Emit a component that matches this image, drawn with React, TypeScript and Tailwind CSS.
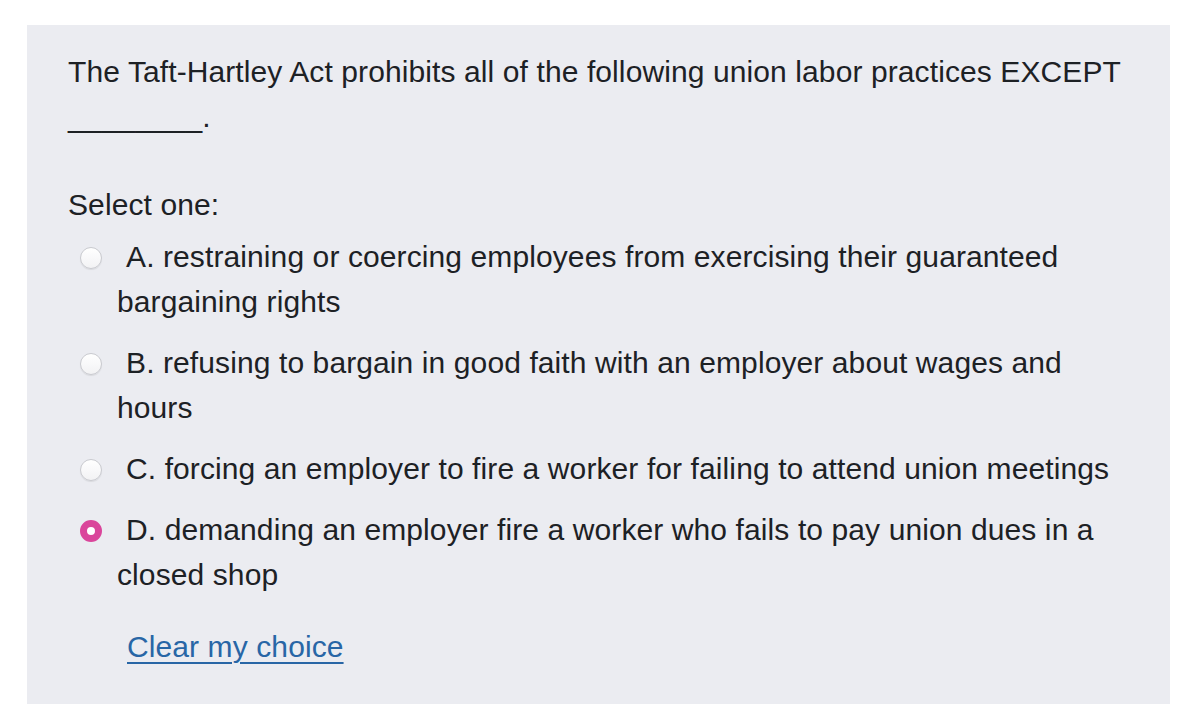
import React from 'react';

const options = [
  { letter: 'A', text: 'restraining or coercing employees from exercising their guaranteed bargaining rights' },
  { letter: 'B', text: 'refusing to bargain in good faith with an employer about wages and hours' },
  { letter: 'C', text: 'forcing an employer to fire a worker for failing to attend union meetings' },
  { letter: 'D', text: 'demanding an employer fire a worker who fails to pay union dues in a closed shop' },
];

function Radio({ checked }: { checked: boolean }) {
  if (checked) {
    return (
      <span className="inline-block h-[22px] w-[22px] rounded-full border-[7px] border-[#da459b] bg-white align-[-2px] mr-[24px]" />
    );
  }
  return (
    <span className="inline-block h-[22px] w-[22px] rounded-full border border-[#c9cacf] bg-gradient-to-b from-white to-[#f2f2f4] shadow-[0_1px_1px_rgba(0,0,0,0.08)] align-[-2px] mr-[24px]" />
  );
}

export default function App() {
  const selected = 'D';
  return (
    <div className="min-h-screen bg-white pt-[25px] pl-[27px] pr-[10px] font-['Liberation_Sans',Arial,sans-serif] text-[#1d2125]">
      <div className="bg-[#ebecf1] pl-[41px] pr-[40px] pt-[24px] pb-[35px] text-[30px] tracking-[0.1px] leading-[45px]">
        <p>
          The Taft-Hartley Act prohibits all of the following union labor practices EXCEPT ________.
        </p>
        <p className="mt-[43px]">Select one:</p>
        <div className="mt-[7px] flex flex-col gap-[16px]">
          {options.map((o) => (
            <div key={o.letter} className="pl-[49px] -indent-[37px]">
              <Radio checked={o.letter === selected} />
              <span>
                {o.letter}. {o.text}
              </span>
            </div>
          ))}
        </div>
        <div className="mt-[27px] pl-[59px]">
          <a href="#" className="text-[#2866a6] underline underline-offset-[5px] decoration-[2px]">
            Clear my choice
          </a>
        </div>
      </div>
    </div>
  );
}
